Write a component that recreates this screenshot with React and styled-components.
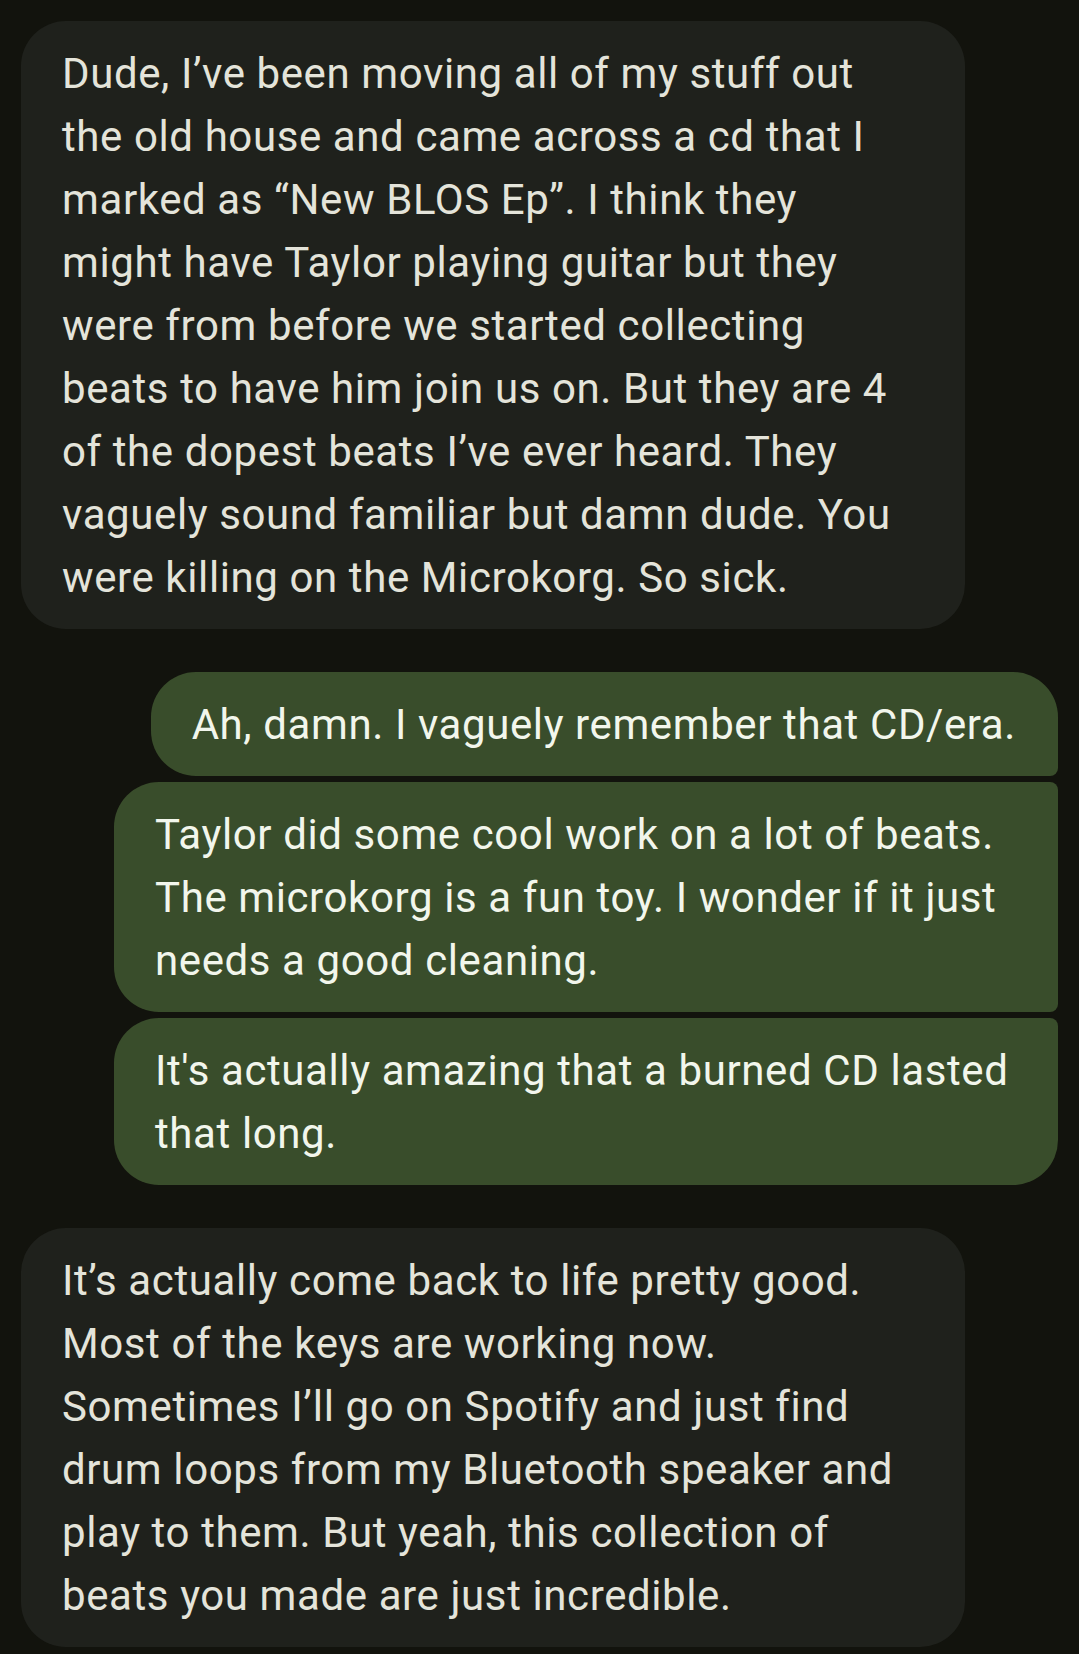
import React from 'react'
import styled, { createGlobalStyle, css } from 'styled-components'

const GlobalStyle = createGlobalStyle`
  html, body {
    margin: 0;
    padding: 0;
    background: #12130d;
  }
  body {
    font-family: Roboto, 'Noto Sans', 'Liberation Sans', sans-serif;
    -webkit-font-smoothing: antialiased;
  }
`

const Thread = styled.div`
  display: flex;
  flex-direction: column;
  padding: 21px 21px 6px;
  min-height: 1654px;
  box-sizing: border-box;
  background: #12130d;
`

const Group = styled.div`
  display: flex;
  flex-direction: column;
  align-items: ${(p) => (p.$mine ? 'flex-end' : 'flex-start')};
  gap: 6px;
  & + & {
    margin-top: 43px;
  }
`

const big = '45px'
const small = '8px'

const Bubble = styled.div`
  box-sizing: border-box;
  max-width: 944px;
  width: ${(p) => (p.$wrap ? '944px' : 'fit-content')};
  padding: 21px 42px 20px 41px;
  font-size: 42px;
  line-height: 63px;
  letter-spacing: 0.6px;
  white-space: nowrap;
  border-radius: ${big};
  ${(p) =>
    p.$mine
      ? css`
          background: #394d2b;
          color: #f2f6ec;
        `
      : css`
          background: #1f211c;
          color: #e4e4da;
        `}
  ${(p) =>
    p.$pos === 'first' &&
    css`
      border-bottom-right-radius: ${small};
    `}
  ${(p) =>
    p.$pos === 'middle' &&
    css`
      border-top-right-radius: ${small};
      border-bottom-right-radius: ${small};
    `}
  ${(p) =>
    p.$pos === 'last' &&
    css`
      border-top-right-radius: ${small};
    `}
`

const Lines = ({ lines }) =>
  lines.map((l, i) => (
    <React.Fragment key={i}>
      {l}
      {i < lines.length - 1 && <br />}
    </React.Fragment>
  ))

const conversation = [
  {
    mine: false,
    bubbles: [
      [
        'Dude, I\u2019ve been moving all of my stuff out',
        'the old house and came across a cd that I',
        'marked as \u201CNew BLOS Ep\u201D. I think they',
        'might have Taylor playing guitar but they',
        'were from before we started collecting',
        'beats to have him join us on. But they are 4',
        'of the dopest beats I\u2019ve ever heard. They',
        'vaguely sound familiar but damn dude. You',
        'were killing on the Microkorg. So sick.',
      ],
    ],
  },
  {
    mine: true,
    bubbles: [
      ['Ah, damn. I vaguely remember that CD/era.'],
      [
        'Taylor did some cool work on a lot of beats.',
        'The microkorg is a fun toy. I wonder if it just',
        'needs a good cleaning.',
      ],
      ["It's actually amazing that a burned CD lasted", 'that long.'],
    ],
  },
  {
    mine: false,
    bubbles: [
      [
        'It\u2019s actually come back to life pretty good.',
        'Most of the keys are working now.',
        'Sometimes I\u2019ll go on Spotify and just find',
        'drum loops from my Bluetooth speaker and',
        'play to them. But yeah, this collection of',
        'beats you made are just incredible.',
      ],
    ],
  },
]

const position = (i, n) => {
  if (n === 1) return 'single'
  if (i === 0) return 'first'
  if (i === n - 1) return 'last'
  return 'middle'
}

export default function App() {
  return (
    <>
      <GlobalStyle />
      <Thread>
        {conversation.map((g, gi) => (
          <Group key={gi} $mine={g.mine}>
            {g.bubbles.map((lines, bi) => (
              <Bubble
                key={bi}
                $mine={g.mine}
                $wrap={lines.length > 1}
                $pos={g.mine ? position(bi, g.bubbles.length) : 'single'}
              >
                <Lines lines={lines} />
              </Bubble>
            ))}
          </Group>
        ))}
      </Thread>
    </>
  )
}
